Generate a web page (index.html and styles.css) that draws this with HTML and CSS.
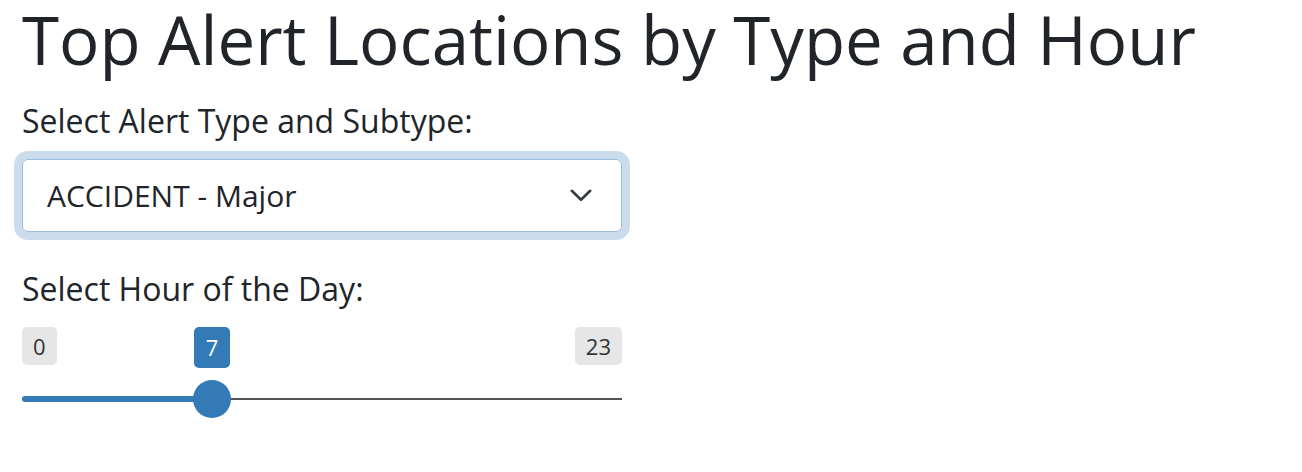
FILE: index.html
```html
<!DOCTYPE html>
<html>
<head>
<meta charset="utf-8">
<link rel="stylesheet" href="styles.css">
</head>
<body>
<div class="page">
  <h1 class="title">Top Alert Locations by Type and Hour</h1>
  <div class="field first">
    <label class="label">Select Alert Type and Subtype:</label>
    <div class="select">
      <span class="select-text">ACCIDENT - Major</span>
      <svg class="chevron" width="22" height="13" viewBox="0 0 22 13"><polyline points="1.8,1.8 11,10.8 20.2,1.8" fill="none" stroke="#343a40" stroke-width="2.6" stroke-linecap="round" stroke-linejoin="round"/></svg>
    </div>
  </div>
  <div class="field second">
    <label class="label">Select Hour of the Day:</label>
    <div class="slider">
      <div class="minmax">
        <span class="tag">0</span>
        <span class="tag">23</span>
      </div>
      <span class="tag current" style="left:172px">7</span>
      <div class="track-area">
        <div class="line"></div>
        <div class="fill" style="width:190px"></div>
        <div class="thumb" style="left:171px"></div>
      </div>
    </div>
  </div>
</div>
</body>
</html>
```
FILE: styles.css
```css
html, body {
  margin: 0;
  padding: 0;
  background: #ffffff;
}
body {
  font-family: "Open Sans", "Liberation Sans", sans-serif;
  color: #212529;
}
.page {
  padding: 0 22px;
}
.title {
  margin: 4px 0 0;
  font-size: 67.2px;
  line-height: 70px;
  font-weight: 400;
  white-space: nowrap;
}
.field.first {
  margin-top: 23px;
}
.field.second {
  margin-top: 33px;
}
.label {
  display: block;
  font-size: 32px;
  line-height: 48px;
}
.select {
  margin-top: 14px;
  width: 600px;
  height: 73px;
  box-sizing: border-box;
  border: 1px solid #99bddb;
  border-radius: 6px;
  box-shadow: 0 0 0 8px #cbddec;
  display: flex;
  align-items: center;
  justify-content: space-between;
  padding: 0 29px 0 24px;
  font-size: 30px;
  line-height: 42px;
}
.chevron {
  display: block;
}
.slider {
  position: relative;
  width: 600px;
  height: 120px;
}
.minmax {
  display: flex;
  justify-content: space-between;
  padding-top: 14px;
}
.tag {
  display: block;
  height: 38px;
  line-height: 38px;
  padding: 0 11px;
  font-size: 22px;
  background: #e6e6e6;
  color: #333333;
  border-radius: 5px;
}
.tag.current {
  position: absolute;
  top: 14px;
  width: 36px;
  height: 41px;
  line-height: 40px;
  padding: 0;
  text-align: center;
  background: #337ab7;
  color: #ffffff;
}
.track-area {
  position: relative;
  margin-top: 15px;
  height: 38px;
}
.line {
  position: absolute;
  left: 0;
  right: 0;
  top: 18px;
  height: 2px;
  background: #555555;
}
.fill {
  position: absolute;
  left: 0;
  top: 16px;
  height: 6px;
  border-radius: 3px 0 0 3px;
  background: #337ab7;
}
.thumb {
  position: absolute;
  top: 0;
  width: 38px;
  height: 38px;
  border-radius: 50%;
  background: #337ab7;
}
```
